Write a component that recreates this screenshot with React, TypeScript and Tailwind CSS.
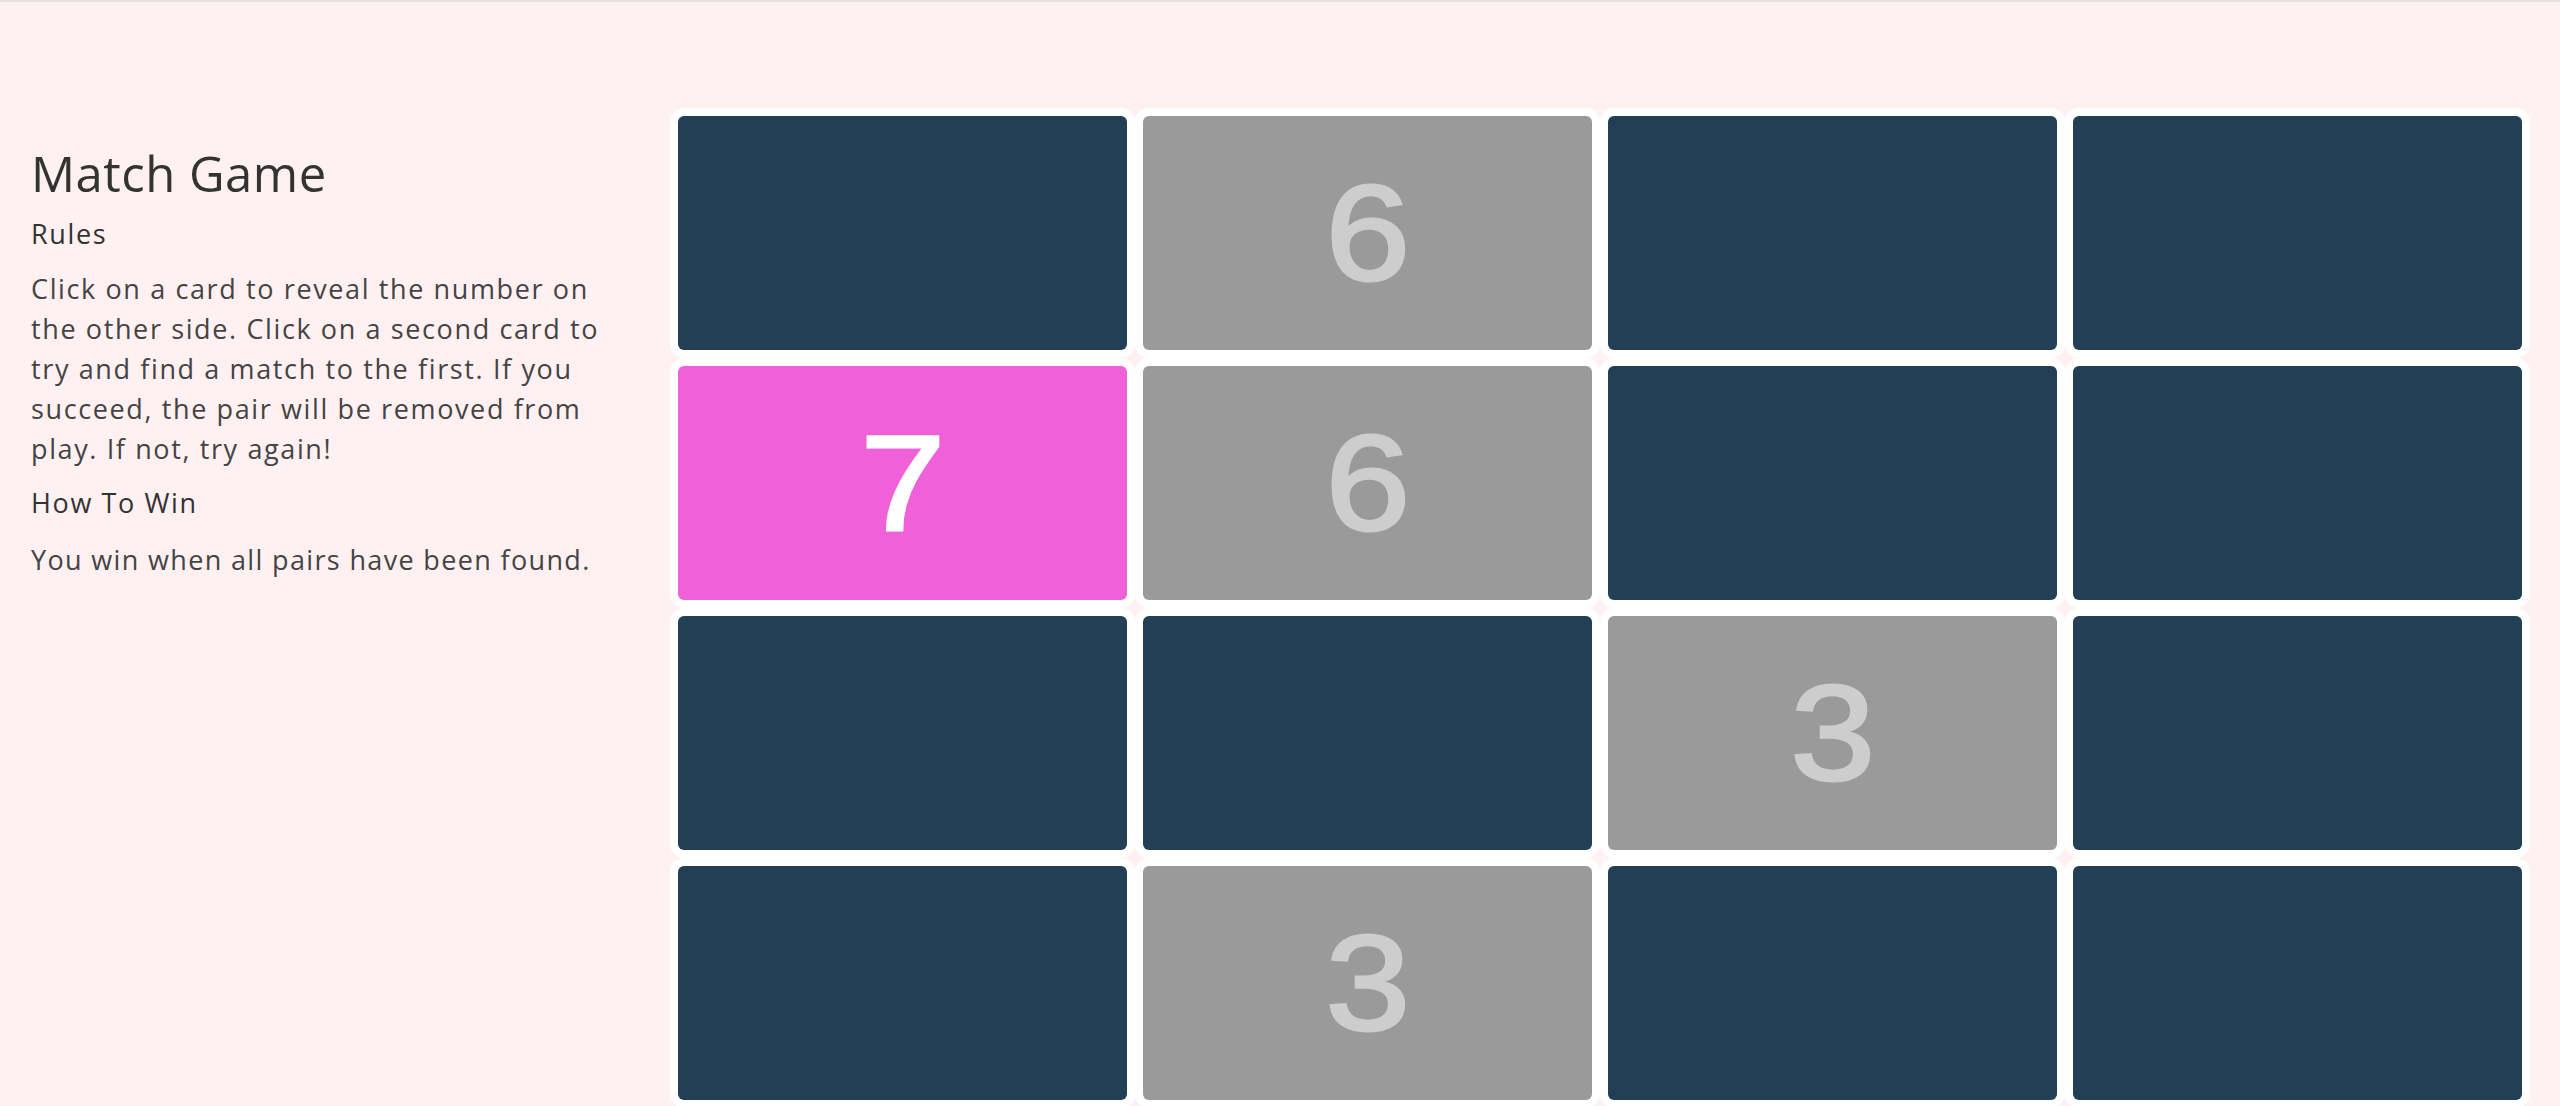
import React from 'react'

type Card = { value: number; state: 'hidden' | 'flipped' | 'matched' }

const cards: Card[] = [
  { value: 1, state: 'hidden' },
  { value: 6, state: 'matched' },
  { value: 2, state: 'hidden' },
  { value: 4, state: 'hidden' },
  { value: 7, state: 'flipped' },
  { value: 6, state: 'matched' },
  { value: 5, state: 'hidden' },
  { value: 8, state: 'hidden' },
  { value: 1, state: 'hidden' },
  { value: 2, state: 'hidden' },
  { value: 3, state: 'matched' },
  { value: 4, state: 'hidden' },
  { value: 5, state: 'hidden' },
  { value: 3, state: 'matched' },
  { value: 8, state: 'hidden' },
  { value: 7, state: 'hidden' },
]

const faceStyles = {
  hidden: 'bg-[#223f56]',
  flipped: 'bg-[#f060d8] text-white',
  matched: 'bg-[#9a9a9a] text-[#cdcdcd]',
}

const GameCard = ({ card }: { card: Card }) => (
  <div className="h-[250px] bg-white rounded-[14px] p-2">
    <div
      className={`h-full rounded-[6px] flex items-center justify-center font-['Liberation_Sans',Arial,sans-serif] text-[136px] leading-none ${faceStyles[card.state]}`}
    >
      {card.state !== 'hidden' && (
        <span className="inline-block scale-x-[1.12] [-webkit-text-stroke:3px_currentColor]">{card.value}</span>
      )}
    </div>
  </div>
)

const App = () => {
  return (
    <div className="min-h-screen bg-[#fff1f1] border-t-2 border-[#e3e3e3] font-['Open_Sans',sans-serif] overflow-hidden">
      <div className="flex">
        <aside className="w-[670px] shrink-0 pl-[31px] pr-[40px]">
          <h1 className="mt-[140px] text-[49px] leading-[62px] text-[#333] tracking-[0.01em]">Match Game</h1>
          <h3 className="mt-[10px] text-[27px] leading-[40px] text-[#333] tracking-[0.06em]">Rules</h3>
          <p className="mt-[15px] text-[27px] leading-[40px] text-[#444] tracking-[0.06em]">
            Click on a card to reveal the number on the other side. Click on a second card to try and
            find a match to the first. If you succeed, the pair will be removed from play. If not, try
            again!
          </p>
          <h3 className="mt-[14px] text-[27px] leading-[40px] text-[#333] tracking-[0.06em]">How To Win</h3>
          <p className="mt-[17px] text-[27px] leading-[40px] text-[#444] tracking-[0.05em]">
            You win when all pairs have been found.
          </p>
        </aside>
        <div className="mt-[106px] w-[1860px] shrink-0 grid grid-cols-4">
          {cards.map((card, i) => (
            <GameCard key={i} card={card} />
          ))}
        </div>
      </div>
    </div>
  )
}

export default App
